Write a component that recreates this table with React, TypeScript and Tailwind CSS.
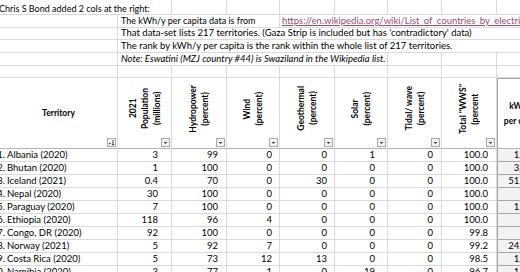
import React from 'react'

// column widths (px) from left edge of sheet view
const colW = ['w-[118px]', 'w-[54px]', 'w-[55px]', 'w-[53px]', 'w-[55px]', 'w-[53px]', 'w-[54px]', 'w-[55px]', 'w-[48px]']
const numPad = ['', 'pr-[13px]', 'pr-[8px]', 'pr-[7px]', 'pr-[7px]', 'pr-[12px]', 'pr-[8px]', 'pr-[8px]']

const grid = 'border-r border-b border-[#dadada]'

interface Row {
  rank: number
  name: string
  values: string[]
  kwh: string
}

const rows: Row[] = [
  { rank: 1, name: 'Albania (2020)', values: ['3', '99', '0', '0', '1', '0', '100.0'], kwh: '1,785' },
  { rank: 2, name: 'Bhutan (2020)', values: ['1', '100', '0', '0', '0', '0', '100.0'], kwh: '3,035' },
  { rank: 3, name: 'Iceland (2021)', values: ['0.4', '70', '0', '30', '0', '0', '100.0'], kwh: '51,719' },
  { rank: 4, name: 'Nepal (2020)', values: ['30', '100', '0', '0', '0', '0', '100.0'], kwh: '197' },
  { rank: 5, name: 'Paraguay (2020)', values: ['7', '100', '0', '0', '0', '0', '100.0'], kwh: '1,590' },
  { rank: 6, name: 'Ethiopia (2020)', values: ['118', '96', '4', '0', '0', '0', '100.0'], kwh: '93' },
  { rank: 7, name: 'Congo, DR (2020)', values: ['92', '100', '0', '0', '0', '0', '99.8'], kwh: '98' },
  { rank: 8, name: 'Norway (2021)', values: ['5', '92', '7', '0', '0', '0', '99.2'], kwh: '24,047' },
  { rank: 9, name: 'Costa Rica (2020)', values: ['5', '73', '12', '13', '0', '0', '98.5'], kwh: '1,980' },
  { rank: 10, name: 'Namibia (2020)', values: ['3', '77', '1', '0', '19', '0', '96.7'], kwh: '1,437' },
]

const headers: string[][] = [
  ['2021', 'Population', '(millions)'],
  ['Hydropower', '(percent)'],
  ['Wind', '(percent)'],
  ['Geothermal', '(percent)'],
  ['Solar', '(percent)'],
  ['Tidal/ wave', '(percent)'],
  ['Total "WWS"', '(percent'],
]

function FilterButton({ sorted }: { sorted?: boolean }) {
  return (
    <div className="absolute right-[1px] bottom-[1px] w-[9px] h-[9px] border border-[#a9a9a9] bg-[#f4f4f4]">
      <svg width="7" height="7" viewBox="0 0 7 7" className="block">
        {sorted ? (
          <>
            <path d="M0.5 4 L3 4 L1.75 5.5 Z" fill="#333" />
            <path d="M5 1 L5 6 M4 5 L5 6.2 L6 5" stroke="#333" strokeWidth="0.9" fill="none" />
          </>
        ) : (
          <path d="M1.5 3 L5.5 3 L3.5 5 Z" fill="#444" />
        )}
      </svg>
    </div>
  )
}

function EmptyCells({ from }: { from: number }) {
  return (
    <>
      {colW.slice(from).map((w, i) => (
        <div key={i} className={`${w} shrink-0 h-full ${grid}`} />
      ))}
    </>
  )
}

export default function App() {
  return (
    <div className="w-[520px] h-[272px] overflow-hidden bg-white text-black text-[9.5px] font-['Lato','Liberation_Sans',sans-serif]">
      <div className="w-[545px] flex flex-col">
        {/* note rows above the table */}
        <div className="flex h-[15px]">
          <div className="w-[172px] shrink-0 h-full flex items-center pt-[4px] border-r border-b border-[#dadada] whitespace-nowrap text-[9px]">
            <span className="-ml-[1px]">Chris S Bond added 2 cols at the right:</span>
          </div>
          <EmptyCells from={2} />
        </div>

        <div className="flex h-[13px]">
          <div className={`${colW[0]} shrink-0 h-full ${grid}`} />
          <div className="w-[162px] shrink-0 h-full flex items-center pl-[3px] border-r border-b border-[#dadada] whitespace-nowrap text-[9px]">
            The kWh/y per capita data is from
          </div>
          <div className="w-[265px] shrink-0 h-full flex items-center pl-[2px] border-b border-[#dadada] whitespace-nowrap">
            <span className="text-[#954f72] underline underline-offset-[1px]">
              https://en.wikipedia.org/wiki/List_of_countries_by_electricity_consumption
            </span>
          </div>
        </div>

        <div className="flex h-[12px]">
          <div className={`${colW[0]} shrink-0 h-full ${grid}`} />
          <div className="w-[427px] shrink-0 h-full flex items-center pl-[3px] border-b border-[#dadada] whitespace-nowrap">
            That data-set lists 217 territories. (Gaza Strip is included but has 'contradictory' data)
          </div>
        </div>

        <div className="flex h-[13px]">
          <div className={`${colW[0]} shrink-0 h-full ${grid}`} />
          <div className="w-[427px] shrink-0 h-full flex items-center pl-[3px] border-b border-[#dadada] whitespace-nowrap">
            The rank by kWh/y per capita is the rank within the whole list of 217 territories.
          </div>
        </div>

        <div className="flex h-[13px]">
          <div className={`${colW[0]} shrink-0 h-full ${grid}`} />
          <div className="w-[270px] shrink-0 h-full flex items-center pl-[3px] border-r border-b border-[#dadada] whitespace-nowrap italic">
            Note: Eswatini (MZJ country #44) is Swaziland in the Wikipedia list.
          </div>
          <EmptyCells from={6} />
        </div>

        <div className="flex h-[12px]">
          <EmptyCells from={0} />
        </div>

        {/* table header */}
        <div className="flex h-[71px] font-bold text-[8.5px]">
          <div className={`${colW[0]} shrink-0 h-full relative flex items-center justify-center border-r border-b border-r-[#dadada] border-b-[#b4b4b4]`}>
            Territory
            <FilterButton sorted />
          </div>
          {headers.map((lines, i) => (
            <div
              key={i}
              className={`${colW[i + 1]} shrink-0 h-full relative flex items-center justify-center pb-[9px] border-r border-b border-r-[#dadada] border-b-[#b4b4b4]`}
            >
              <div className="[writing-mode:vertical-rl] rotate-180 text-center leading-[12px] whitespace-nowrap">
                {lines.map((l, j) => (
                  <div key={j}>{l}</div>
                ))}
              </div>
              <FilterButton />
            </div>
          ))}
          <div className={`${colW[8]} shrink-0 h-full flex flex-col items-center justify-center pl-[2px] leading-[15px] border-l border-t border-b border-[#a6a6a6] border-b-[#b4b4b4]`}>
            <div>kWh/y</div>
            <div className="whitespace-nowrap">per capita</div>
          </div>
        </div>

        {/* table body */}
        {rows.map((r) => (
          <div key={r.rank} className="flex h-[13px] shrink-0">
            <div className={`${colW[0]} shrink-0 h-full flex items-center whitespace-nowrap ${grid}`}>
              <span className="inline-block shrink-0 w-[16px] -ml-[11px] text-right">{r.rank}.</span>
              <span className="ml-[2px]">{r.name}</span>
            </div>
            {r.values.map((v, i) => (
              <div key={i} className={`${colW[i + 1]} shrink-0 h-full flex items-center justify-end ${numPad[i + 1]} ${grid}`}>
                {v}
              </div>
            ))}
            <div className={`${colW[8]} shrink-0 h-full flex items-center justify-end pr-[7px] bg-[#f2f2f2] border-l border-b border-[#a6a6a6]`}>
              {r.kwh}
            </div>
          </div>
        ))}
      </div>
    </div>
  )
}
